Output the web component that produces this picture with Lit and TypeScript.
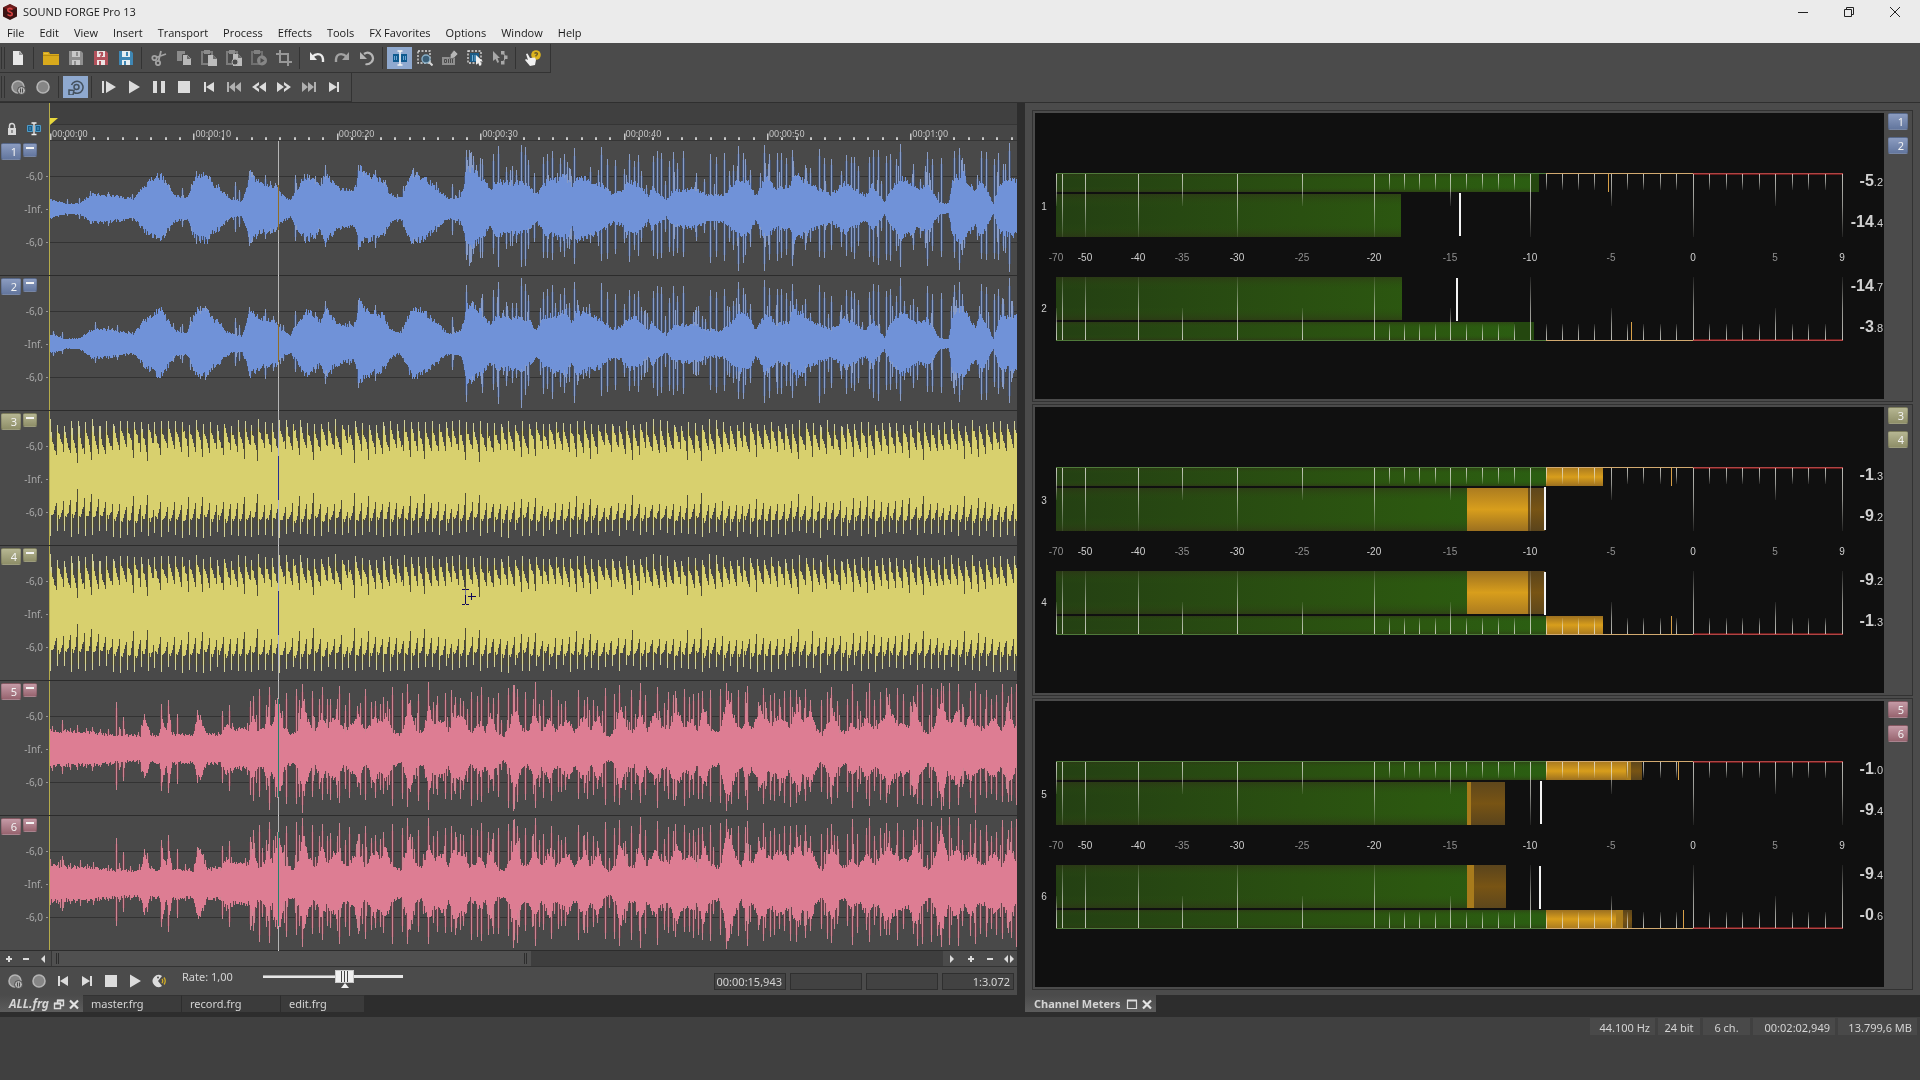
import { LitElement, html, css, svg } from "lit";
import { customElement, property } from "lit/decorators.js";
import { classMap } from "lit/directives/class-map.js";
import { styleMap } from "lit/directives/style-map.js";

type Pair = [number, number];
type Hue = "blue" | "yellow" | "pink";

/* ---------------------------------------------------------------- icons */

const LIGHT = "#dcdcdc";
const DIM = "#a2a2a2";
const floppy = (body: string, inner: string, mark = svg``) => svg`
  <path fill=${body} d="M1 1h12l2 2v12H1z"/>
  <path fill=${inner} d="M4 1h8v6H4zM4 10h8v5H4z"/>
  <path fill=${body} d="M8 2h2v4H8zM6 11h2v4H6z"/>${mark}`;
const ring = svg`<circle cx="8" cy="8" r="6" fill="#868686" stroke="#b4b4b4" stroke-width="1.6"/>`;

const ICONS: Record<string, unknown> = {
  new: svg`<path fill="#e8e8e8" d="M3 1h7l3 4v10H3z"/><path fill="#9a9a9a" d="M9 1v4h4z"/>`,
  open: svg`<path fill="#d9aa1c" d="M0 2h6l1 2h9v11H0z"/><path fill="#e9c23c" d="M1 3h4v1H1z"/><path fill="#b88c10" d="M0 5h16v1H0z"/>`,
  save: floppy("#8f8f8f", "#c9c9c9"),
  saveAs: floppy("#b4525c", "#ece4e4", svg`<path d="M6 3.500q2-2 3.500 0q0 1.500-1.500 2v1.500" fill="none" stroke="#b4525c" stroke-width="1.500"/>`),
  saveAll: floppy("#3f87b4", "#e6eef2"),
  cut: svg`<g fill="none" stroke=${DIM} stroke-width="1.8"><circle cx="3.500" cy="8" r="2.200"/><circle cx="7" cy="13" r="2.200"/><path d="M5 7.500L15 4M7.500 11L10 1"/></g>`,
  copy: svg`<path fill="#8b8b8b" d="M1 1h8v10H1z"/><path fill="#b8b8b8" stroke="#4a4a4a" d="M6.500 4.500h5l4 4v7h-9z"/><path fill="#6a6a6a" d="M11 5v4h4z"/>`,
  paste: svg`<path fill="none" stroke="#7c7c7c" stroke-width="2" d="M1 2h10v12H1z"/><path fill="#8c8c8c" d="M3 0h6v4H3z"/><path fill="#bcbcbc" d="M7 5h5l4 4v7H7z"/><path fill="#6a6a6a" d="M12 5v4h4z"/>`,
  pasteNew: svg`<path fill="none" stroke="#7c7c7c" stroke-width="2" d="M1 2h10v12H1z"/><path fill="#8c8c8c" d="M3 0h6v4H3z"/><path fill="#bcbcbc" d="M7 4h5l4 4v8H7z"/><circle cx="9" cy="12" r="3" fill="#4a4a4a" stroke="#b0b0b0"/><path fill="#6a6a6a" d="M12 4v4h4z"/>`,
  pastePlay: svg`<path fill="none" stroke="#707070" stroke-width="2" d="M1 2h10v12H1z"/><path fill="#808080" d="M3 0h6v4H3z"/><circle cx="11" cy="10.500" r="5" fill="#868686"/><path fill="#4a4a4a" d="M9.500 8l4 2.500-4 2.500z"/>`,
  crop: svg`<path fill="none" stroke="#989898" stroke-width="2" d="M4 0v12h12M0 4h12v12"/>`,
  undo: svg`<path fill="none" stroke="#ececec" stroke-width="2.400" d="M3 7q4-4 8-2.500q3.500 1.500 3 7.500"/><path fill="#ececec" d="M1 2v8h7z"/>`,
  redo: svg`<path fill="none" stroke=${DIM} stroke-width="2.400" d="M13 7q-4-4-8-2.500q-3.500 1.500-3 7.500"/><path fill=${DIM} d="M15 2v8H8z"/>`,
  refresh: svg`<path fill="none" stroke="#b6b6b6" stroke-width="2.200" d="M5 4q4-3 7.500.500q3 4 0 7.500q-3 3-6 2"/><path fill="#b6b6b6" d="M1 2v7h7z"/>`,
  editTool: svg`<path fill="#0f5b8f" d="M1 4h6v8H1zM9 4h6v8H9z"/><path fill="none" stroke="#6fa6d4" d="M2.500 6v4M4.500 6v4M11.500 6v4M13.500 6v4"/><path fill="none" stroke="#f4f4f4" stroke-width="1.500" d="M5.500 1h5M5.500 15h5M8 1v14"/>`,
  magnify: svg`<path fill="none" stroke="#e0e0e0" stroke-width="1.300" stroke-dasharray="2 1.500" d="M1 1h12v12H1z"/><circle cx="9" cy="9" r="4" fill="#3b5f78" stroke="#8ab0c8" stroke-width="1.400"/><path stroke="#d8d8d8" stroke-width="2" d="M12 12l3.500 3.500"/>`,
  pencil: svg`<path fill="#8f8f8f" d="M0 7h13v8H0z"/><path fill="none" stroke="#4a4a4a" d="M2.500 9.500h2v3h-2zM6.500 9v4M8.500 9v4M10.500 9v4"/><path fill="#b6b6b6" stroke="#4a4a4a" stroke-width=".6" d="M12 0l4 4-4 4-4 1 .500-4.500z"/>`,
  event: svg`<path fill="#1b5b86" d="M3 3h9v9H3z"/><path stroke="#6fb0d8" d="M5.500 5v6M8 5v6"/><path fill="none" stroke="#e0e0e0" stroke-width="1.300" stroke-dasharray="2 1.500" d="M1 1h13v12H1z"/><path fill="#f0f0f0" d="M9 5l7 6.500h-3l1.500 3.500-2 1-1.500-3.500L9 15z"/>`,
  envelope: svg`<path fill="#a8a8a8" d="M1 1l7 7H5.500l1.500 4-1.500 1-2-4L1 11zM9 1h3.500v3.500H9zM12 5.500h3.500V9H12zM9 11h3.500v3.500H9z"/><path stroke="#a8a8a8" fill="none" d="M11 3l3 4-3.500 6"/>`,
  help: svg`<circle cx="11" cy="5" r="4.800" fill="#dcb41e"/><path d="M9.500 3.500q1.500-1.500 3 0q0 1.500-1.500 2v1" fill="none" stroke="#6a5a28" stroke-width="1.300"/><path fill="#f0f0f0" d="M1 4l1.500-.500L5 8l5-.500 1 2.500-1 5-5 1L0 10l1-1 2 1z"/>`,
  recRemote: svg`${ring}<circle cx="11.500" cy="11.500" r="4" fill="#b4b4b4" stroke="#4a4a4a"/><path stroke="#4a4a4a" d="M10.500 9.500v4M12.500 9.500v4"/>`,
  rec: ring,
  loop: svg`<circle cx="8.500" cy="8" r="2.500" fill="none" stroke="#44515e" stroke-width="1.500"/><path fill="none" stroke="#44515e" stroke-width="1.500" d="M3.500 6a6 6 0 1 1 2.500 7.500M1 11l5 .500-1 4.500H1z"/>`,
  playAll: svg`<path fill=${LIGHT} d="M1 2h2v12H1zM5 2l10 6-10 6z"/>`,
  play: svg`<path fill=${LIGHT} d="M3 1.500l11 6.500-11 6.500z"/>`,
  pause: svg`<path fill=${LIGHT} d="M2 2h4v12H2zM10 2h4v12h-4z"/>`,
  stop: svg`<path fill=${LIGHT} d="M2 2h12v12H2z"/>`,
  start: svg`<path fill=${LIGHT} d="M3 3h2v10H3zM13 3v10L5 8z"/>`,
  prev: svg`<path fill="#b0b0b0" d="M1 3h2v10H1zM9 3v10L3 8zM15 3v10L9 8z"/>`,
  rewind: svg`<path fill=${LIGHT} d="M8 3v3l-3 2 3 2v3L1 8zM15 3v10L8 8z"/>`,
  forward: svg`<path fill=${LIGHT} d="M8 3v3l3 2-3 2v3l7-5zM1 3v10l7-5z"/>`,
  next: svg`<path fill="#b0b0b0" d="M13 3h2v10h-2zM7 3v10l6-5zM1 3v10l6-5z"/>`,
  end: svg`<path fill=${LIGHT} d="M11 3h2v10h-2zM3 3v10l8-5z"/>`,
  scrub: svg`<path fill=${LIGHT} d="M11 3A6 6 0 1 0 11 13L7 8z"/><circle cx="7" cy="4.500" r="1" fill="#4a4a4a"/><path fill="none" stroke="#d0ac28" stroke-width="1.300" d="M11 6q1.500 2 0 4M13 4.500q2.500 3.500 0 7"/>`,
  lock: svg`<path fill="#d8d8d8" d="M4 7h8v7H4z"/><path fill="none" stroke="#d8d8d8" stroke-width="1.500" d="M5.500 7V5a2.500 2.500 0 0 1 5 0v2"/><path fill="#4a4a4a" d="M7.500 9h1v3h-1z"/>`,
  ibeam: svg`<path fill="#1b5b86" stroke="#4f9cc8" d="M1.500 4.500h5v6h-5zM9.500 4.500h5v6h-5z"/><path stroke="#4f9cc8" d="M4 6v3M12 6v3"/><path fill="none" stroke="#f0f0f0" stroke-width="1.300" d="M5.500 2h5M5.500 13.500h5M8 2v11.500"/>`,
  plus: svg`<path fill=${LIGHT} d="M7 5h2v2h2v2H9v2H7V9H5V7h2z"/>`,
  minus: svg`<path fill=${LIGHT} d="M5 7h6v2H5z"/>`,
  left: svg`<path fill=${LIGHT} d="M10 4v8L6 8z"/>`,
  right: svg`<path fill=${LIGHT} d="M6 4v8l4-4z"/>`,
  both: svg`<path fill=${LIGHT} d="M7 4v8L3 8zM9 4v8l4-4z"/>`,
  minimize: svg`<path stroke="#222" d="M3 8.500h10"/>`,
  restore: svg`<path fill="none" stroke="#222" d="M3.500 5.500h7v7h-7zM5.500 5.500v-2h7v7h-2"/>`,
  close: svg`<path stroke="#222" d="M3 3l10 10M13 3L3 13"/>`,
  tabRestore: svg`<path fill="none" stroke="#dcdcdc" stroke-width="1.400" d="M3.500 7.500h6v5h-6zM6.500 7V4.500h6v5H10"/><path stroke="#dcdcdc" stroke-width="2" d="M6 4.500h7M3 7.500h7"/>`,
  tabBox: svg`<path fill="none" stroke="#dcdcdc" stroke-width="1.200" d="M3.500 4.500h9v8h-9z"/><path stroke="#dcdcdc" stroke-width="2" d="M3 4.500h10"/>`,
  tabClose: svg`<path stroke="#e4e4e4" stroke-width="2.200" d="M4 4.500l8 8M12 4.500l-8 8"/>`,
};

const icon = (name: string) =>
  html`<svg class="icon" viewBox="0 0 16 16" aria-hidden="true">${ICONS[name]}</svg>`;

/* ------------------------------------------------------------- waveform */

const WAVE_W = 967;
const WAVE_H = 134;
const MID = 68;

const fromLeft = (list: Pair[]): Pair[] => list.map(([x, h]) => [(x - 150) / 3, h]);
const fromRight = (list: Pair[]): Pair[] => list.map(([x, h]) => [x / 2.904 + 450, h]);

const BLUE_BODY: Pair[] = [
  ...fromLeft([[150, 10], [200, 5], [240, 6], [255, 10], [275, 15], [320, 14], [345, 13], [400, 10], [410, 14], [430, 23], [465, 32], [485, 33], [500, 25], [520, 14], [560, 11], [575, 24], [590, 33], [620, 34], [640, 24], [655, 23], [670, 15], [690, 10], [725, 8], [735, 18], [750, 35], [760, 30], [780, 26], [810, 23], [833, 22], [842, 14], [870, 9], [880, 15], [900, 25], [915, 33], [935, 30], [960, 22], [975, 34], [985, 32], [1000, 25], [1020, 20], [1060, 18], [1070, 26], [1076, 44], [1090, 35], [1110, 32], [1150, 28], [1165, 17], [1190, 11], [1205, 12], [1215, 22], [1235, 35], [1270, 32], [1300, 23], [1330, 14], [1350, 10], [1380, 13], [1390, 22], [1398, 40], [1420, 39], [1445, 30], [1470, 20], [1490, 28], [1540, 26]]),
  ...fromRight([[0, 26], [60, 27], [80, 24], [105, 14], [125, 26], [190, 32], [210, 21], [220, 33], [290, 25], [325, 15], [350, 17], [370, 26], [400, 25], [430, 13], [440, 22], [482, 9], [500, 18], [560, 20], [600, 14], [650, 14], [690, 30], [720, 28], [742, 13], [770, 32], [800, 20], [840, 22], [850, 36], [900, 24], [960, 14], [1000, 26], [1060, 13], [1080, 24], [1115, 6], [1130, 18], [1165, 32], [1215, 21], [1240, 25], [1275, 6], [1302, 5], [1312, 28], [1340, 36], [1380, 17], [1395, 30], [1432, 5], [1450, 26], [1475, 28], [1500, 28]]),
];
const BLUE_SPIKES: Pair[] = [
  ...fromLeft([[325, 18], [484, 35], [545, 22], [706, 27], [718, 20], [748, 38], [796, 36], [885, 35], [975, 44], [1074, 45], [1126, 41], [1357, 27], [1399, 60], [1417, 44], [1447, 51], [1480, 55], [1495, 63], [1519, 45], [1537, 44], [1549, 41]]),
  ...fromRight([[18, 44], [35, 43], [60, 66], [73, 62], [82, 50], [125, 52], [137, 56], [152, 60], [175, 52], [187, 56], [200, 42], [216, 62], [294, 62], [310, 52], [333, 50], [360, 40], [375, 56], [390, 50], [400, 54], [410, 38], [443, 54], [455, 58], [467, 57], [490, 48], [503, 58], [515, 48], [532, 58], [569, 38], [611, 56], [626, 53], [650, 56], [665, 38], [678, 44], [690, 64], [705, 57], [712, 50], [727, 40], [768, 65], [782, 57], [805, 57], [816, 56], [831, 53], [847, 60], [885, 46], [925, 60], [940, 52], [962, 50], [990, 40], [1005, 56], [1020, 54], [1028, 52], [1040, 45], [1072, 53], [1084, 60], [1099, 60], [1120, 53], [1133, 56], [1150, 50], [1162, 67], [1200, 46], [1241, 59], [1255, 50], [1280, 52], [1319, 60], [1334, 63], [1342, 52], [1398, 60], [1412, 58], [1435, 52], [1447, 56], [1460, 46], [1478, 67]]),
];
const PINK_BODY: Pair[] = [
  ...fromLeft([[150, 18], [200, 17], [260, 17], [340, 14], [420, 13], [430, 28], [440, 26], [450, 14], [478, 14], [486, 32], [498, 18], [506, 34], [515, 15], [580, 14], [590, 33], [604, 28], [620, 15], [660, 15], [678, 25], [700, 20], [745, 20], [757, 34], [772, 18], [790, 20], [803, 34], [815, 22], [835, 50], [850, 20], [880, 14], [895, 22], [907, 46], [925, 26], [945, 17], [965, 36], [980, 22], [1010, 34], [1030, 18], [1050, 22], [1075, 34], [1095, 16], [1120, 32], [1140, 26], [1155, 36], [1175, 18], [1205, 14], [1225, 46], [1245, 20], [1268, 16], [1285, 42], [1300, 24], [1330, 30], [1345, 18], [1360, 34], [1392, 30], [1410, 16], [1440, 26], [1455, 18], [1470, 34], [1490, 16], [1510, 12], [1530, 24], [1542, 44]]),
  ...fromRight([[0, 16], [10, 12], [26, 24], [42, 44], [62, 20], [82, 18], [98, 36], [118, 18], [142, 32], [160, 18], [198, 30], [215, 17], [245, 34], [262, 17], [284, 34], [302, 15], [318, 12], [335, 20], [346, 44], [370, 18], [390, 18], [405, 38], [425, 18], [448, 34], [470, 22], [490, 22], [512, 38], [535, 22], [555, 30], [572, 18], [590, 40], [608, 20], [635, 16], [645, 28], [660, 56], [680, 30], [700, 18], [714, 34], [730, 20], [758, 38], [778, 26], [790, 26], [816, 34], [840, 22], [862, 42], [880, 28], [900, 36], [918, 20], [935, 14], [965, 38], [985, 18], [1005, 17], [1020, 26], [1040, 18], [1065, 32], [1085, 20], [1105, 26], [1128, 40], [1150, 26], [1168, 26], [1185, 22], [1205, 44], [1225, 20], [1245, 15], [1262, 24], [1280, 52], [1300, 24], [1325, 36], [1345, 22], [1365, 32], [1385, 22], [1405, 20], [1438, 32], [1455, 18], [1478, 36], [1500, 18]]),
];
const PINK_SPIKES: Pair[] = [
  ...fromLeft([[187, 29], [211, 22], [325, 20], [347, 47], [358, 22], [370, 34], [433, 36], [484, 45], [505, 50], [530, 36], [590, 39], [601, 35], [665, 39], [688, 45], [750, 48], [760, 55], [778, 60], [797, 45], [803, 42], [808, 63], [825, 50], [830, 53], [838, 46], [859, 58], [889, 62], [896, 50], [905, 67], [911, 50], [937, 60], [958, 50], [967, 62], [982, 50], [991, 52], [1010, 50], [1018, 63], [1034, 45], [1048, 57], [1072, 45], [1096, 60], [1114, 48], [1126, 50], [1141, 45], [1150, 53], [1177, 62], [1207, 57], [1222, 67], [1230, 50], [1255, 55], [1285, 67], [1300, 48], [1312, 54], [1336, 57], [1354, 60], [1366, 54], [1381, 52], [1390, 50], [1414, 58], [1432, 55], [1444, 62], [1465, 54], [1480, 52], [1495, 57], [1525, 50], [1540, 66], [1552, 60]]),
  ...fromRight([[24, 62], [40, 65], [73, 58], [97, 50], [101, 67], [114, 46], [126, 50], [149, 60], [168, 50], [178, 46], [190, 48], [226, 60], [245, 50], [254, 53], [271, 50], [283, 44], [304, 62], [330, 57], [346, 64], [364, 44], [381, 59], [404, 50], [408, 67], [422, 55], [455, 63], [475, 47], [487, 58], [501, 55], [508, 60], [535, 60], [548, 52], [561, 56], [576, 57], [587, 58], [611, 60], [640, 62], [655, 67], [672, 57], [690, 60], [711, 58], [716, 65], [751, 45], [765, 63], [785, 55], [797, 57], [810, 50], [824, 58], [843, 60], [860, 60], [870, 50], [886, 60], [900, 50], [932, 50], [950, 58], [960, 62], [980, 50], [1008, 52], [1022, 66], [1038, 50], [1063, 57], [1073, 67], [1087, 50], [1103, 58], [1122, 62], [1130, 55], [1152, 62], [1170, 55], [1200, 55], [1212, 66], [1226, 66], [1253, 63], [1268, 60], [1280, 67], [1305, 67], [1330, 66], [1342, 45], [1365, 60], [1380, 66], [1395, 56], [1410, 60], [1425, 50], [1440, 54], [1457, 66], [1475, 54], [1485, 64], [1498, 65]]),
];

function random(seed: number) {
  let s = seed;
  return () => {
    s = (s + 0x6d2b79f5) | 0;
    let t = Math.imul(s ^ (s >>> 15), 1 | s);
    t = (t + Math.imul(t ^ (t >>> 7), 61 | t)) ^ t;
    return ((t ^ (t >>> 14)) >>> 0) / 4294967296;
  };
}

function level(points: Pair[], x: number) {
  let i = 1;
  while (i < points.length - 1 && points[i][0] < x) i++;
  const [x0, a] = points[i - 1];
  const [x1, b] = points[i];
  const t = Math.min(1, Math.max(0, (x - x0) / (x1 - x0 || 1)));
  return a + (b - a) * t;
}

interface Shape { body: string; spikes: string; halo: string }

function buildWave(hue: Hue, seed: number): Shape {
  const rnd = random(seed);
  const up: number[] = [];
  const down: number[] = [];
  const spikeUp = new Map<number, number>();
  const spikeDown = new Map<number, number>();
  if (hue === "yellow") {
    const shapeUp = [44, 41, 39, 35, 31, 29, 25];
    const shapeDown = [33, 32, 34, 32, 28, 24, 19];
    const beat = 6.93;
    let last = -1;
    let depth = 0;
    let lift = 0;
    for (let x = 0; x < WAVE_W; x++) {
      const n = Math.floor(x / beat);
      const pos = Math.min(6, Math.floor(x - n * beat));
      if (n !== last) {
        depth = n % 8 === 3 || n % 8 === 5 ? 1.1 : rnd() * 0.4;
        lift = rnd() * 6 - 2;
        last = n;
        spikeUp.set(x, 53 + rnd() * 7);
        spikeDown.set(x, 51 + rnd() * 8);
        if (rnd() > 0.4) spikeUp.set(x + 1, 43 + rnd() * 10);
      }
      const full = x > 60 ? 3 : 0;
      const cutAway = pos > 4 ? depth * (pos === 6 ? 9 : 4) : 0;
      up.push(shapeUp[pos] + full + lift - cutAway + rnd() * 4 - 1);
      down.push(shapeDown[pos] + full + 2 + lift / 2 - cutAway + rnd() * 4);
    }
  } else {
    const points = hue === "blue" ? BLUE_BODY : PINK_BODY;
    const peaks = hue === "blue" ? BLUE_SPIKES : PINK_SPIKES;
    const busy = hue === "blue" ? 415 : 200;
    const lower = hue === "blue" ? 0.92 : 0.96;
    for (let x = 0; x < WAVE_W; x++) {
      const h = level(points, x);
      up.push(h * (0.88 + rnd() * 0.24));
      down.push(h * lower * (0.86 + rnd() * 0.28));
      if (rnd() < 0.11) {
        const extra = x > busy ? 6 + rnd() * 14 : rnd() * 7;
        spikeUp.set(x, h + extra);
        spikeDown.set(x, h * lower + extra * (0.5 + rnd() * 0.6));
      }
    }
    for (const [x, h] of peaks) {
      const col = Math.min(WAVE_W - 1, Math.round(x));
      spikeUp.set(col, h - rnd() * 2);
      spikeDown.set(col, h * (0.8 + rnd() * 0.18));
    }
  }
  let body = "";
  let spikes = "";
  let halo = "";
  for (let x = 0; x < WAVE_W; x++) {
    const u = Math.round(up[x]);
    const d = Math.round(down[x]);
    body += `M${x} ${MID - u}h1V${MID + d}h-1z`;
    const su = Math.round(spikeUp.get(x) ?? 0);
    const sd = Math.round(spikeDown.get(x) ?? 0);
    if (su > u) spikes += `M${x} ${MID - su}h1V${MID - u}h-1z`;
    if (sd > d) spikes += `M${x} ${MID + d}h1V${MID + sd}h-1z`;
    const nu = Math.round(Math.max(spikeUp.get(x - 1) ?? 0, spikeUp.get(x + 1) ?? 0, up[x - 1] ?? 0, up[x + 1] ?? 0) * 0.88);
    const nd = Math.round(Math.max(spikeDown.get(x - 1) ?? 0, spikeDown.get(x + 1) ?? 0, down[x - 1] ?? 0, down[x + 1] ?? 0) * 0.88);
    if (nu > u) halo += `M${x} ${MID - nu}h1V${MID - u}h-1z`;
    if (nd > d) halo += `M${x} ${MID + d}h1V${MID + nd}h-1z`;
  }
  return { body, spikes, halo };
}

@customElement("wave-form")
class WaveForm extends LitElement {
  @property() hue: Hue = "blue";
  @property({ type: Number }) seed = 1;

  static styles = css`
    :host { display: block; min-width: 0; min-height: 0; overflow: hidden; }
    svg { display: block; width: 100%; height: 100%; }
    .grid { fill: #333333; }
    .blue .body { fill: #7092d8; }
    .blue .spikes { fill: #889cc6; }
    .blue .halo { fill: #44526e; }
    .yellow .body { fill: #d8d06e; }
    .yellow .spikes { fill: #d2d096; }
    .yellow .halo { fill: #504d35; }
    .pink .body { fill: #dd7d93; }
    .pink .spikes { fill: #cd8391; }
    .pink .halo { fill: #66444c; }
  `;

  render() {
    const shape = buildWave(this.hue, this.seed);
    return html`<svg class=${this.hue} viewBox="0 0 ${WAVE_W} ${WAVE_H}" preserveAspectRatio="none" shape-rendering="crispEdges" role="img" aria-label="Waveform">
      <path class="grid" d="M0 35h967v1H0zM0 101h967v1H0z"/>
      <path class="halo" d=${shape.halo}/>
      <path class="spikes" d=${shape.spikes}/>
      <path class="body" d=${shape.body}/>
    </svg>`;
  }
}

/* --------------------------------------------------------------- meters */

const METER_W = 787;
const TICKS: [number, number, string?][] = [
  [0, 1, "-70"], [6, 2], [29, 2, "-50"], [82, 2, "-40"], [126, 1, "-35"], [181, 2, "-30"], [246, 1, "-25"], [318, 2, "-20"],
  [333, 0], [348, 0], [363, 0], [379, 0], [394, 1, "-15"], [410, 0], [426, 0], [442, 0], [458, 0], [474, 2, "-10"],
  [490, 0], [506, 0], [522, 0], [538, 0], [555, 1, "-5"], [571, 0], [587, 0], [604, 0], [620, 0], [637, 2, "0"],
  [653, 0], [670, 0], [686, 0], [703, 0], [719, 1, "5"], [736, 0], [752, 0], [769, 0], [786, 2, "9"],
];

interface Bar { green: number; orange?: number; mid?: number; dark?: number; peak: number }
interface MeterData { peaks: [Bar, Bar]; levels: [Bar, Bar]; values: string[] }

const METERS: MeterData[] = [
  {
    peaks: [{ green: 474, dark: 483, peak: 552 }, { green: 458, dark: 478, peak: 575 }],
    levels: [{ green: 345, peak: 403 }, { green: 346, peak: 400 }],
    values: ["-5.2", "-14.4", "-14.7", "-3.8"],
  },
  {
    peaks: [{ green: 490, orange: 547, peak: 615 }, { green: 490, orange: 547, peak: 615 }],
    levels: [{ green: 411, orange: 472, dark: 489, peak: 488 }, { green: 411, orange: 472, dark: 489, peak: 488 }],
    values: ["-1.3", "-9.2", "-9.2", "-1.3"],
  },
  {
    peaks: [{ green: 490, orange: 570, mid: 575, dark: 586, peak: 622 }, { green: 490, orange: 560, mid: 567, dark: 576, peak: 627 }],
    levels: [{ green: 411, mid: 415, dark: 449, peak: 484 }, { green: 411, mid: 418, dark: 450, peak: 483 }],
    values: ["-1.0", "-9.4", "-9.4", "-0.6"],
  },
];

@customElement("channel-meter")
class ChannelMeter extends LitElement {
  @property({ attribute: false }) data: MeterData = METERS[0];
  @property({ type: Number }) first = 1;

  static styles = css`
    :host {
      display: grid;
      grid-template-columns: 21px 1fr 41px;
      align-items: center;
      padding-top: 2px;
      background: #101010;
      color: #d0d0d0;
      font: 10px/12px "Liberation Sans", Arial, sans-serif;
      min-width: 0;
    }
    .channels { display: flex; flex-direction: column; align-items: center; gap: 90px; padding: 2px 3px 0 0; }
    .scale { position: relative; height: 168px; min-width: 0; }
    svg { display: block; width: 100%; height: 100%; overflow: visible; }
    .mark { position: absolute; top: 79px; width: 30px; margin-left: -15px; text-align: center; color: #909090; }
    .mark.major { color: #d0d0d0; }
    .values { display: flex; flex-direction: column; justify-content: space-between; height: 165px; padding-bottom: 6px; }
    .pair { display: flex; flex-direction: column; gap: 22px; }
    .value { text-align: right; padding-right: 1px; line-height: 18px; font-size: 11px; white-space: nowrap; }
    .value b { font-size: 16px; }
  `;

  private bar(bar: Bar, y: number, h: number, wide: boolean) {
    const darkFrom = bar.mid ?? bar.orange ?? bar.green;
    const darkClass = bar.orange || bar.green === 411 ? "url(#darkOrange)" : "#24470f";
    return svg`
      <rect x="0" y=${y} width=${bar.green} height=${h} fill="url(#green)"/>
      <rect x="0" y=${y} width=${bar.green} height=${h} fill="url(#edge)"/>
      ${bar.dark ? svg`<rect x=${darkFrom} y=${y} width=${bar.dark - darkFrom} height=${h} fill=${darkClass}/>` : ""}
      ${bar.mid ? svg`<rect x=${bar.orange ?? bar.green} y=${y} width=${bar.mid - (bar.orange ?? bar.green)} height=${h} fill="#a87b1c"/>` : ""}
      ${bar.orange ? svg`<rect x=${bar.green} y=${y} width=${bar.orange - bar.green} height=${h} fill="url(#orange)"/>` : ""}
      <rect x=${bar.peak} y=${y - (wide ? 1 : 0)} width=${wide ? 2 : 1} height=${h} fill=${wide ? "#f4f4f4" : "#d8a048"}/>`;
  }

  private half(peak: Bar, lvl: Bar, flipped: boolean) {
    const lengths = [16, 32, 63];
    return svg`<g transform=${flipped ? "translate(0 168) scale(1 -1)" : "translate(0 0)"}>
      ${this.bar(peak, 1, 18, false)}
      ${this.bar(lvl, 21, 43, true)}
      <rect x="0" y="0" width="490" height="1" fill="#4f7a3a"/>
      <rect x="490" y="0" width="147" height="1" fill="#d2aa70"/>
      <rect x="637" y="0" width="150" height="1" fill="#b04444"/>
      <rect x="637" y="1" width="150" height="1" fill="#6a1c1c"/>
      ${TICKS.map(([x, kind]) => svg`<rect x=${x} y="1" width="1" height=${lengths[kind]} fill="url(#fade)"/>`)}
    </g>`;
  }

  render() {
    const { peaks, levels, values } = this.data;
    const value = (text: string) => {
      const [whole, part] = text.split(".");
      return html`<div class="value"><b>${whole}</b>.${part}</div>`;
    };
    return html`
      <div class="channels"><span>${this.first}</span><span>${this.first + 1}</span></div>
      <div class="scale">
        <svg viewBox="0 0 ${METER_W} 168" preserveAspectRatio="none" shape-rendering="crispEdges" role="img" aria-label="Level meter">
          <defs>
            <linearGradient id="green" gradientUnits="userSpaceOnUse" x1="0" y1="0" x2="490" y2="0">
              <stop offset="0" stop-color="#244013"/><stop offset=".5" stop-color="#2a5011"/><stop offset=".75" stop-color="#2c5810"/><stop offset="1" stop-color="#2b5f12"/>
            </linearGradient>
            <linearGradient id="edge" x1="0" y1="0" x2="0" y2="1">
              <stop offset="0" stop-color="#303018" stop-opacity=".5"/><stop offset=".3" stop-color="#2a5410" stop-opacity="0"/><stop offset=".7" stop-color="#2a5410" stop-opacity="0"/><stop offset="1" stop-color="#303018" stop-opacity=".5"/>
            </linearGradient>
            <linearGradient id="orange" x1="0" y1="0" x2="0" y2="1">
              <stop offset="0" stop-color="#ac7c20"/><stop offset=".5" stop-color="#d89e1c"/><stop offset="1" stop-color="#9c7020"/>
            </linearGradient>
            <linearGradient id="darkOrange" x1="0" y1="0" x2="0" y2="1">
              <stop offset="0" stop-color="#5e471c"/><stop offset=".5" stop-color="#785414"/><stop offset="1" stop-color="#5a441c"/>
            </linearGradient>
            <linearGradient id="fade" x1="0" y1="0" x2="0" y2="1">
              <stop offset="0" stop-color="#e8e8e0" stop-opacity=".8"/><stop offset=".5" stop-color="#e8e8e0" stop-opacity=".6"/><stop offset="1" stop-color="#e8e8e0" stop-opacity=".08"/>
            </linearGradient>
          </defs>
          ${this.half(peaks[0], levels[0], false)}
          ${this.half(peaks[1], levels[1], true)}
        </svg>
        ${TICKS.filter((t) => t[2]).map(([x, kind, text]) => html`<span
          class=${classMap({ mark: true, major: kind === 2 })}
          style=${styleMap({ left: `${(x / METER_W) * 100}%` })}>${text}</span>`)}
      </div>
      <div class="values">
        <div class="pair">${value(values[0])}${value(values[1])}</div>
        <div class="pair">${value(values[2])}${value(values[3])}</div>
      </div>`;
  }
}

/* ------------------------------------------------------------ main view */

const MENUS = ["File", "Edit", "View", "Insert", "Transport", "Process", "Effects", "Tools", "FX Favorites", "Options", "Window", "Help"];
const MAIN_TOOLS = [
  ["new"], ["open", "save", "saveAs", "saveAll"], ["cut", "copy", "paste", "pasteNew", "pastePlay", "crop"],
  ["undo", "redo", "refresh"], ["editTool", "magnify", "pencil", "event", "envelope"], ["help"],
];
const TRANSPORT_TOOLS = [["recRemote", "rec"], ["loop"], ["playAll", "play", "pause", "stop", "start", "prev", "rewind", "forward", "next", "end"]];
const PLAY_BAR = ["recRemote", "rec", "start", "end", "stop", "play", "scrub"];
const PRESSED = new Set(["editTool", "loop"]);
const TIMES = ["00:00:00", "00:00:10", "00:00:20", "00:00:30", "00:00:40", "00:00:50", "00:01:00"];
const TRACKS: { n: number; hue: Hue; seed: number }[] = [
  { n: 1, hue: "blue", seed: 11 }, { n: 2, hue: "blue", seed: 29 },
  { n: 3, hue: "yellow", seed: 7 }, { n: 4, hue: "yellow", seed: 7 },
  { n: 5, hue: "pink", seed: 41 }, { n: 6, hue: "pink", seed: 53 },
];
const HUES: Hue[] = ["blue", "yellow", "pink"];
const STATUS = ["44.100 Hz", "24 bit", "6 ch.", "00:02:02,949", "13.799,6 MB"];

@customElement("app-root")
class AppRoot extends LitElement {
  static styles = css`
    :host {
      display: flex;
      flex-direction: column;
      min-height: 100vh;
      background: #404040;
      color: #d4d4d4;
      font: 11px/16px "Noto Sans", "Open Sans", sans-serif;
    }
    * { box-sizing: border-box; }
    button { border: 0; padding: 0; margin: 0; background: none; color: inherit; font: inherit; }
    .icon { display: block; width: 16px; height: 16px; flex: none; }

    .head { background: #ebebeb; color: #1a1a1a; height: 43px; font: 11px/20px "Open Sans", "Noto Sans", sans-serif; }
    .title { display: flex; align-items: center; height: 23px; padding-left: 2px; gap: 5px; }
    .title h1 { margin: 0; font: inherit; flex: 1; }
    .window { display: flex; gap: 30px; padding-right: 17px; }
    .menu { display: flex; gap: 15px; padding-left: 7px; height: 20px; }

    .bars { background: #4b4b4b; height: 60px; padding-top: 1px; display: flex; flex-direction: column; align-items: flex-start; border-bottom: 1px solid #2f2f2f; }
    .bar { display: flex; align-items: center; height: 29px; padding: 0 5px 0 1px; border-right: 1px solid #333; border-bottom: 1px solid #333; }
    .grip { width: 4px; height: 22px; border-left: 1px solid #333; border-right: 1px solid #333; }
    .tool { width: 25px; height: 22px; display: grid; place-items: center; }
    .tool.pressed { background: #8fa9cf; }
    .set { display: flex; }
    .set + .set { margin-left: 3px; border-left: 1px solid #333; padding-left: 4px; }

    .work { flex: 1; display: grid; grid-template-columns: 1025fr 895fr; min-height: 0; background: #2d2d2d; }
    .editor { display: flex; flex-direction: column; min-width: 0; padding-right: 8px; }
    .ruler { display: grid; grid-template-columns: 49px 1fr; height: 38px; background: #4b4b4b; }
    .corner { display: flex; align-items: flex-end; gap: 6px; padding: 0 0 4px 4px; }
    .times { position: relative; background: #404040; border-left: 1px solid #b5ac4a; display: flex; flex-direction: column; overflow: hidden; }
    .flag { height: 22px; border-bottom: 1px solid #353535; }
    .flag svg { display: block; margin-top: 15px; width: 8px; height: 7px; }
    .stamps { display: flex; height: 16px; background: #464646; border-bottom: 1px solid #353535; position: relative; }
    .stamps svg { position: absolute; inset: 0; width: 100%; height: 100%; }
    .stamp { width: 14.83%; flex: none; padding-left: 2px; font-size: 9px; line-height: 17px; color: #c4c4c4; }

    .tracks { flex: 1; position: relative; display: grid; grid-template-rows: repeat(6, 1fr); background: #494949; min-height: 0; }
    .track { display: grid; grid-template-columns: 49px 1fr; border-bottom: 1px solid #2c2c2c; min-height: 0; }
    .track wave-form { border-left: 1px solid #b5ac4a; }
    .side { display: grid; grid-template-rows: 29fr 33fr 33fr 39fr; background: #4b4b4b; min-height: 0; }
    .chips { display: flex; gap: 2px; padding: 2px 0 0 1px; align-items: flex-start; }
    .chip { width: 20px; height: 17px; text-align: right; padding-right: 3px; color: #f2f2f2; line-height: 16px; border: 1px solid #0002; border-radius: 2px; }
    .chip.mini { display: flex; width: 14px; height: 14px; padding: 3px 2px 0; }
    .chip.mini::before { content: ""; flex: 1; height: 2px; background: #f4f4f4; }
    .chip.blue { background: linear-gradient(#8b9cc0, #63769e); }
    .chip.yellow { background: linear-gradient(#b6b692, #8e8e68); }
    .chip.pink { background: linear-gradient(#c59aa6, #97646f); }
    .db { display: flex; justify-content: flex-end; align-items: center; height: 12px; gap: 3px; padding-right: 1px; font-size: 10px; line-height: 12px; color: #a8a8a8; }
    .db::after { content: ""; width: 2px; height: 1px; background: #999; }
    .over { position: absolute; top: 0; bottom: 0; left: 50px; right: 0; pointer-events: none; mix-blend-mode: difference; }
    .playhead { position: absolute; top: 0; bottom: 0; left: 23.6%; width: 1px; background: #fff; }
    .pointer { position: absolute; left: 42.5%; top: 55.3%; width: 15px; height: 16px; }

    .scroll { display: flex; align-items: center; height: 16px; background: #3e3e3e; border-bottom: 1px solid #333; }
    .scroll button { width: 17px; height: 15px; display: grid; place-items: center; }
    .cell { display: flex; background: #4b4b4b; height: 15px; }
    .cell.right { gap: 2px; }
    .thumb { width: 480px; height: 15px; background: #505050; border-left: 1px solid #363636; display: flex; justify-content: space-between; padding: 2px 4px; }
    .thumb i { width: 3px; border-left: 1px solid #2d2d2d; border-right: 1px solid #2d2d2d; }
    .space { flex: 1; }

    .player { display: flex; align-items: center; height: 28px; background: #4b4b4b; padding: 0 3px; }
    .player .tool { width: 24px; }
    .rate { display: flex; align-items: flex-start; gap: 30px; margin-left: 11px; height: 24px; }
    .slider { position: relative; width: 140px; height: 14px; }
    .slider svg { position: absolute; left: 78px; top: 14px; width: 8px; height: 5px; }
    input[type="range"] { -webkit-appearance: none; appearance: none; display: block; margin: 0; width: 140px; height: 14px; background: linear-gradient(#a6a6a6, #a6a6a6) 0 6px / 80px 1px no-repeat, linear-gradient(#e6e6e6, #e6e6e6) 0 6px / 100% 3px no-repeat; }
    input[type="range"]::-webkit-slider-thumb { -webkit-appearance: none; width: 19px; height: 13px; border: 1px solid #c8c8c8; background: linear-gradient(90deg, #f0f0f0 5px, #444 5px 6px, #f0f0f0 6px 8px, #444 8px 9px, #f0f0f0 9px 11px, #444 11px 12px, #f0f0f0 12px); }
    .fields { display: flex; gap: 4px; margin-left: auto; }
    .field { width: 72px; height: 17px; border: 1px solid #2f2f2f; background: #424242; text-align: right; padding-right: 3px; line-height: 16px; }

    .tabs { display: flex; height: 22px; padding-bottom: 5px; }
    .tab { display: flex; align-items: center; width: 99px; padding-left: 8px; background: #3b3b3b; border-right: 1px solid #2d2d2d; border-top: 1px solid #333; text-align: left; }
    .tab.last { width: 84px; }
    .tab.active { width: auto; border: 0; background: linear-gradient(#4b4b4b, #5c5c5c); font-weight: bold; padding: 0 2px 0 9px; }
    .tab.active button { width: 15px; display: grid; place-items: center; }
    .tab em { margin-right: 2px; font-size: 12px; }
    .tab span { margin-right: 3px; }

    .meters { display: flex; flex-direction: column; min-width: 0; }
    .groups { flex: 1; display: flex; flex-direction: column; gap: 2px; padding: 7px 7px 5px; background: #4b4b4b; }
    .group { flex: 1; display: grid; grid-template-columns: 1fr 26px; border: 1px solid #323232; padding: 2px; }
    .keys { display: flex; flex-direction: column; gap: 7px; padding-left: 4px; }

    .status { height: 63px; display: grid; grid-template-columns: 65px 42px 47px 82px 79px; justify-content: end; gap: 3px; padding: 1px 3px 0 0; }
    .status span { height: 17px; background: #494949; padding: 0 5px; line-height: 19px; text-align: right; white-space: nowrap; }
    .status .mid { text-align: center; }
  `;

  private toolbar(sets: string[][], label: string) {
    return html`<div class="bar" role="toolbar" aria-label=${label}>
      <i class="grip"></i>
      ${sets.map((set) => html`<div class="set">${set.map((name) => this.tool(name))}</div>`)}
    </div>`;
  }

  private tool(name: string) {
    return html`<button class=${classMap({ tool: true, pressed: PRESSED.has(name) })} aria-label=${name}>${icon(name)}</button>`;
  }

  private renderRuler() {
    let ticks = "";
    for (let i = 0; i < 68; i++) {
      const x = Math.round(i * 14.34);
      ticks += i % 10 === 0 ? `M${x} 9h1.500v7h-1.500z` : `M${x} 13h2v3h-2z`;
    }
    return html`<div class="ruler">
      <div class="corner">${icon("lock")}${icon("ibeam")}</div>
      <div class="times">
        <div class="flag"><svg viewBox="0 0 8 7"><path fill="#e8d83c" d="M0 0h8L0 7z"/></svg></div>
        <div class="stamps">
          <svg viewBox="0 0 967 16" preserveAspectRatio="none"><path fill="#c8c8c8" d=${ticks}/></svg>
          ${TIMES.map((t) => html`<span class="stamp">${t}</span>`)}
        </div>
      </div>
    </div>`;
  }

  private renderTrack(track: { n: number; hue: Hue; seed: number }) {
    return html`<section class="track" aria-label="Track ${track.n}">
      <div class="side">
        <div class="chips">
          <button class="chip ${track.hue}">${track.n}</button>
          <button class="chip mini ${track.hue}" aria-label="Minimize track"></button>
        </div>
        <div class="db">-6,0</div><div class="db">-Inf.</div><div class="db">-6,0</div>
      </div>
      <wave-form .hue=${track.hue} .seed=${track.seed}></wave-form>
    </section>`;
  }

  private scrollButton(name: string) {
    return html`<button aria-label=${name}>${icon(name)}</button>`;
  }

  render() {
    return html`
      <header class="head">
        <div class="title">
          <svg class="icon" viewBox="0 0 16 16" aria-hidden="true">
            <path fill="#3c1414" d="M8 0l7 3.500v9L8 16l-7-3.500v-9z"/><path fill="#8c2222" d="M8 0l7 3.500L8 7 1 3.500z" opacity=".6"/>
            <path fill="none" stroke="#d84444" stroke-width="1.600" d="M10.500 5.500Q8 3.500 6 5q-1 2 2 3t2 3q-2 1.500-4.500-.500"/>
          </svg>
          <h1>SOUND FORGE Pro 13</h1>
          <div class="window">
            <button aria-label="Minimize">${icon("minimize")}</button>
            <button aria-label="Restore">${icon("restore")}</button>
            <button aria-label="Close">${icon("close")}</button>
          </div>
        </div>
        <nav class="menu">${MENUS.map((m) => html`<button>${m}</button>`)}</nav>
      </header>
      <div class="bars">
        ${this.toolbar(MAIN_TOOLS, "Standard")}
        ${this.toolbar(TRANSPORT_TOOLS, "Transport")}
      </div>
      <main class="work">
        <div class="editor">
          ${this.renderRuler()}
          <div class="tracks">
            ${TRACKS.map((t) => this.renderTrack(t))}
            <div class="over">
              <div class="playhead"></div>
              <svg class="pointer" viewBox="0 0 15 16"><path fill="none" stroke="#c8c8c8" d="M1 .500h3M5 .500h3M4.500 1v14M1 15.500h3M5 15.500h3M7 7.500h8M10.500 4v7"/></svg>
            </div>
          </div>
          <div class="scroll">
            <div class="cell">${this.scrollButton("plus")}${this.scrollButton("minus")}${this.scrollButton("left")}</div>
            <div class="thumb"><i></i><i></i></div>
            <div class="space"></div>
            <div class="cell right">${this.scrollButton("right")}${this.scrollButton("plus")}${this.scrollButton("minus")}${this.scrollButton("both")}</div>
          </div>
          <div class="player">
            ${PLAY_BAR.map((name) => this.tool(name))}
            <div class="rate">
              <label for="rate">Rate: 1,00</label>
              <div class="slider">
                <input id="rate" type="range" min="0" max="100" value="60">
                <svg viewBox="0 0 8 5" aria-hidden="true"><path fill="#f0f0f0" d="M4 0l4 5H0z"/></svg>
              </div>
            </div>
            <div class="fields">
              <output class="field">00:00:15,943</output><output class="field"></output><output class="field"></output><output class="field">1:3.072</output>
            </div>
          </div>
          <div class="tabs">
            <div class="tab active"><em>ALL.frg</em><button aria-label="Restore document">${icon("tabRestore")}</button><button aria-label="Close document">${icon("tabClose")}</button></div>
            <button class="tab">master.frg</button><button class="tab">record.frg</button><button class="tab last">edit.frg</button>
          </div>
        </div>
        <div class="meters">
          <div class="groups">
            ${METERS.map((m, i) => html`<section class="group">
              <channel-meter .data=${m} .first=${i * 2 + 1}></channel-meter>
              <div class="keys"><button class="chip ${HUES[i]}">${i * 2 + 1}</button><button class="chip ${HUES[i]}">${i * 2 + 2}</button></div>
            </section>`)}
          </div>
          <div class="tabs">
            <div class="tab active"><span>Channel Meters</span><button aria-label="Float panel">${icon("tabBox")}</button><button aria-label="Close panel">${icon("tabClose")}</button></div>
          </div>
        </div>
      </main>
      <footer class="status">${STATUS.map((s, i) => html`<span class=${classMap({ mid: i === 1 || i === 2 })}>${s}</span>`)}</footer>`;
  }
}
